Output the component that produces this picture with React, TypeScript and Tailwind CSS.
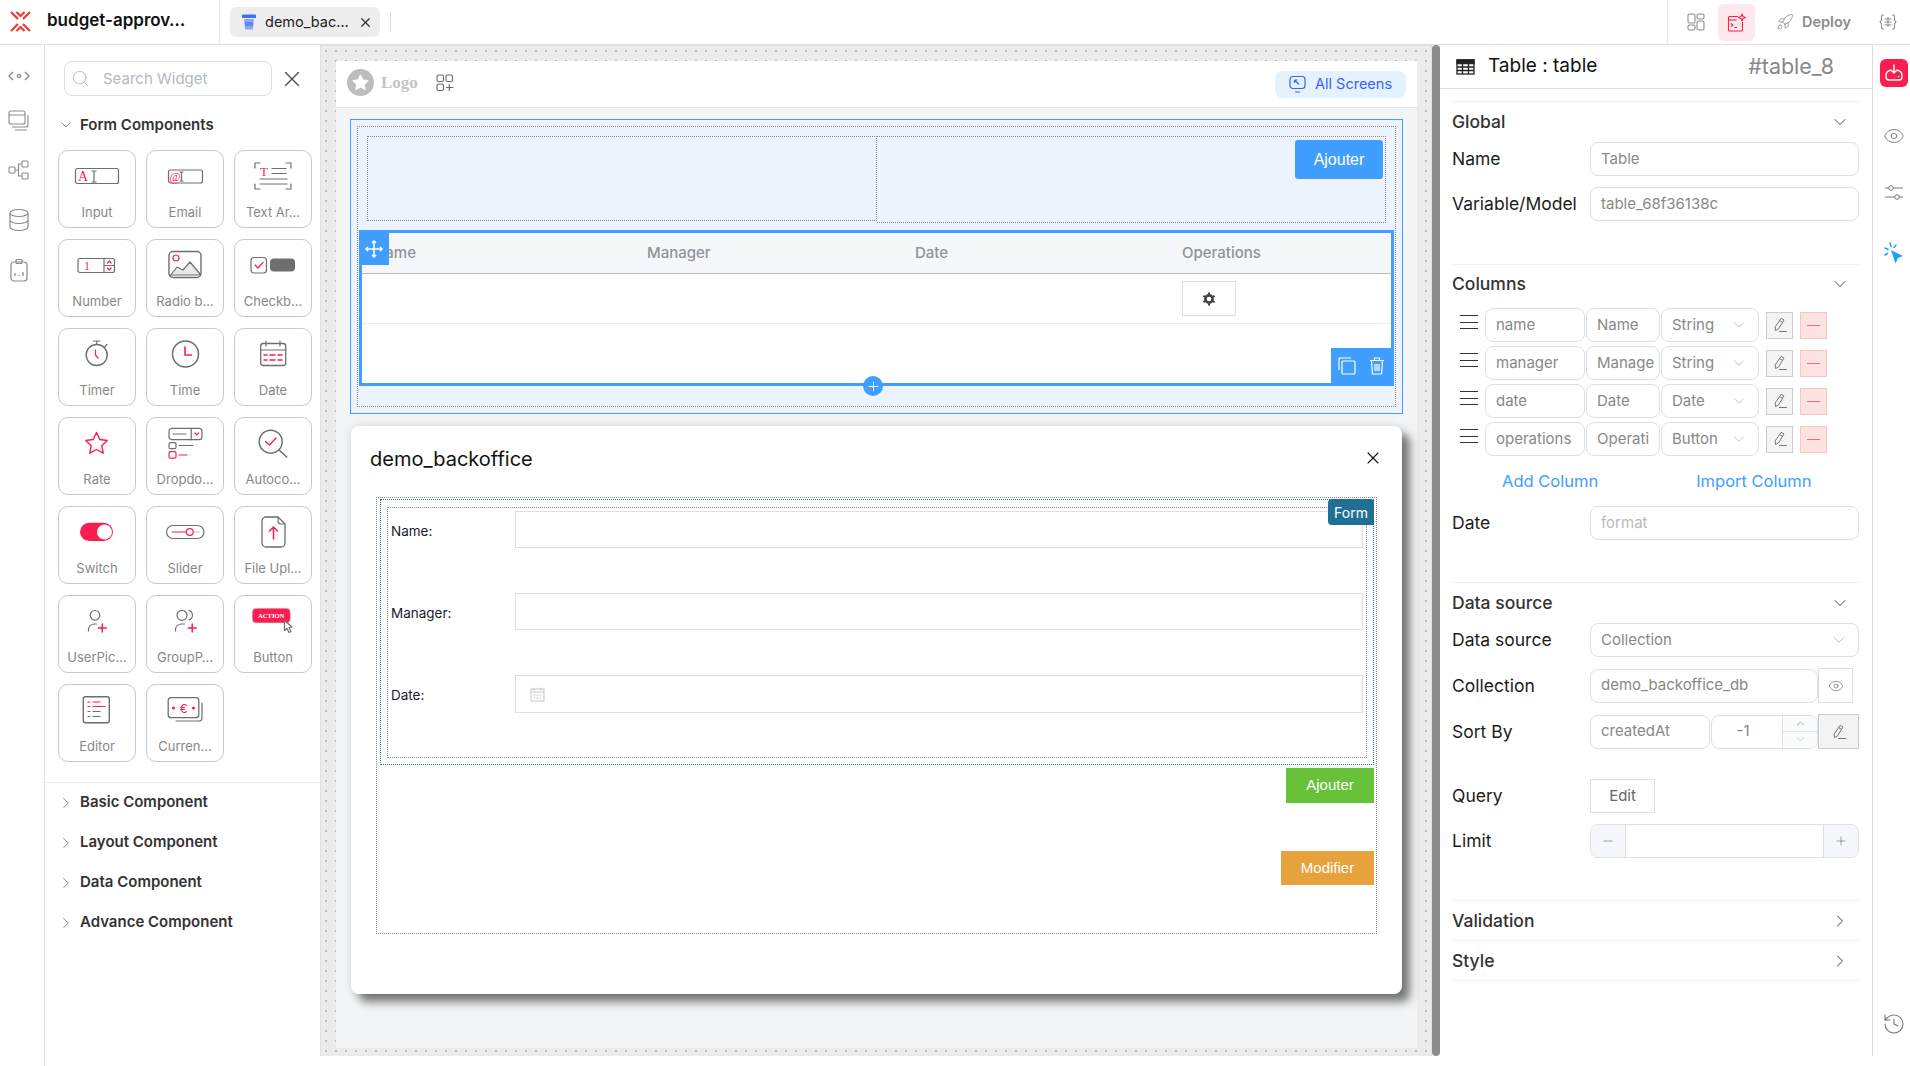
import React from "react";
import { ChevronDown, ChevronRight, ChevronUp, Eye, History, Minus, Plus, Rocket, Search, X } from "lucide-react";

const GR = "#6e6e6e";
const RD = "#fb1d4f";

const Ico: React.FC<{ children: React.ReactNode }> = ({ children }) => (
  <svg width="48" height="40" viewBox="0 0 48 40" fill="none" stroke={GR} strokeWidth="1.2" strokeLinecap="round" strokeLinejoin="round">
    {children}
  </svg>
);

const IText: React.FC<{ x: number; y: number; s: number; children: React.ReactNode; c?: string }> = ({ x, y, s, children, c }) => (
  <text x={x} y={y} fontSize={s} fill={c || RD} stroke="none" fontFamily="'Liberation Serif', serif">
    {children}
  </text>
);

const widgets: { label: string; icon: React.ReactNode }[] = [
  { label: "Input", icon: <Ico><rect x="2.5" y="12.5" width="43" height="15" rx="2" /><IText x={5} y={25} s={14}>A</IText><path d="M19 15h4M21 15v11M19 26h4" /></Ico> },
  { label: "Email", icon: <Ico><rect x="7.5" y="14" width="34" height="13" rx="2" /><IText x={8.5} y={25} s={12}>@</IText><path d="M19 16h3M20.5 16v9M19 25h3" /></Ico> },
  { label: "Text Ar…", icon: <Ico><path d="M11 7H6v5M37 7h5v5M6 28v5h5M42 28v5h-5" /><IText x={11} y={20} s={13}>T</IText><path d="M23 12.5h14M23 17.5h14M11 23h27M11 28h27" /></Ico> },
  { label: "Number", icon: <Ico><rect x="5" y="13.5" width="36.5" height="14" rx="2" /><path d="M31 13.5v14M31 20.5h10.5" /><IText x={11} y={25} s={12}>1</IText><path d="M34.5 18l1.8-2 1.8 2M34.5 23l1.8 2 1.8-2" stroke={RD} /></Ico> },
  { label: "Radio b…", icon: <Ico><rect x="8" y="6.5" width="32" height="26" rx="4" strokeWidth="1.4" /><path d="M9 31l7-9 6 3 7-8 10 12v1H9z" fill="#e9e9e9" /><circle cx="15" cy="13" r="3" stroke={RD} /></Ico> },
  { label: "Checkb…", icon: <Ico><rect x="2" y="12.5" width="15.5" height="15.5" rx="3" /><path d="M6 20l3 3 5-5.5" stroke={RD} /><rect x="21" y="13.5" width="25" height="13" rx="4" fill={GR} stroke="none" /></Ico> },
  { label: "Timer", icon: <Ico><circle cx="23.7" cy="21" r="10.5" strokeWidth="1.4" /><path d="M20.5 7h6.5M23.7 7v3.5M31.5 13l2.5-2.5" /><path d="M22.5 16v5l2.5 3" stroke={RD} /></Ico> },
  { label: "Time", icon: <Ico><circle cx="24.5" cy="20" r="13" strokeWidth="1.5" /><path d="M24 13v8h6.5" stroke={RD} strokeWidth="1.6" /></Ico> },
  { label: "Date", icon: <Ico><rect x="11.7" y="9.5" width="25" height="22" rx="2.5" strokeWidth="1.3" /><path d="M11.7 16h25M17 7v5M31 7v5" /><path d="M15 21h3M21 21h5M29 21h4M15 26h3M21 26h5M29 26h4" stroke={RD} strokeWidth="1.5" /></Ico> },
  { label: "Rate", icon: <Ico><path d="M23.5 9.5l3.3 7 7.5 1-5.5 5.2 1.4 7.5-6.7-3.7-6.7 3.7 1.4-7.5-5.5-5.2 7.5-1z" stroke={RD} strokeWidth="1.4" /></Ico> },
  { label: "Dropdo…", icon: <Ico><rect x="8" y="5.3" width="33" height="11.4" rx="3" /><path d="M30.2 5.3v11.4M12 11h13" /><path d="M34 10l1.8 1.8 1.8-1.8" stroke={RD} /><rect x="8" y="19.7" width="7" height="6" rx="1.5" /><path d="M18 22.5h14" /><rect x="8" y="28.7" width="7" height="6.5" rx="1.5" stroke={RD} /><path d="M18 32h8" stroke={RD} /></Ico> },
  { label: "Autoco…", icon: <Ico><circle cx="21.7" cy="18.7" r="11.5" strokeWidth="1.5" /><path d="M30 27l7.7 7" strokeWidth="1.6" /><path d="M16.5 18.5l4 3.5 6.5-7" stroke={RD} strokeWidth="1.4" /></Ico> },
  { label: "Switch", icon: <Ico><rect x="7" y="10.8" width="33" height="18.2" rx="9.1" fill={RD} stroke="none" /><circle cx="31.5" cy="20" r="7.5" fill="#fff" stroke="none" /></Ico> },
  { label: "Slider", icon: <Ico><rect x="5.5" y="13.5" width="37.5" height="13" rx="6.5" /><path d="M11 20h14" stroke={RD} /><circle cx="28.8" cy="20" r="3.4" stroke={RD} /><path d="M33 20h5" stroke="#bbb" /></Ico> },
  { label: "File Upl…", icon: <Ico><path d="M17 5h12l7 7v19a4 4 0 0 1-4 4H17a4 4 0 0 1-4-4V9a4 4 0 0 1 4-4z" strokeWidth="1.3" /><path d="M29 5v4a3 3 0 0 0 3 3h4" /><path d="M24.5 27V15M20.5 19l4-4 4 4" stroke={RD} strokeWidth="1.5" /></Ico> },
  { label: "UserPic…", icon: <Ico><circle cx="22" cy="14.3" r="4.8" /><path d="M15.5 30v-2a6 6 0 0 1 6-5h2" /><path d="M29.3 23v8M25.3 27h8" stroke={RD} strokeWidth="1.5" /></Ico> },
  { label: "GroupP…", icon: <Ico><circle cx="21" cy="14.3" r="5" /><path d="M28 9.5a5 5 0 0 1 0 9.5" /><path d="M14.5 30v-2a6 6 0 0 1 6-5h3" /><path d="M31.2 23v8M27.2 27h8" stroke={RD} strokeWidth="1.5" /></Ico> },
  { label: "Button", icon: <Ico><rect x="3.3" y="7.3" width="38" height="14.6" rx="4" fill={RD} stroke="#c9c9c9" strokeWidth="0.6" /><text x="22.2" y="17" fontSize="6.6" fontWeight="700" fill="#fff" stroke="none" textAnchor="middle" fontFamily="'Liberation Serif', serif">ACTION</text><path d="M35.5 19.5l0 10 2.5-2 2 4 2-1-2-4 3-.5z" fill="#fff" /></Ico> },
  { label: "Editor", icon: <Ico><rect x="10.3" y="6.7" width="26" height="26" rx="2" strokeWidth="1.4" /><path d="M15 12h2M20 12h7M15 16.5h2M20 16.5h12" stroke={RD} strokeWidth="1.2" /><path d="M15 21.5h2M20 21.5h7M15 26.5h2M20 26.5h7" /></Ico> },
  { label: "Curren…", icon: <Ico><rect x="7.2" y="7.7" width="30.6" height="20" rx="3" strokeWidth="1.3" /><path d="M41 13v15a3 3 0 0 1-3 3H15" /><text x="22.5" y="23" fontSize="13" textAnchor="middle" fill={RD} stroke="none" fontFamily="'Liberation Sans', sans-serif">€</text><circle cx="12.5" cy="18" r="0.9" fill={RD} stroke={RD} /><circle cx="32.5" cy="18" r="0.9" fill={RD} stroke={RD} /></Ico> },
];

const WidgetCard: React.FC<{ label: string; icon: React.ReactNode }> = ({ label, icon }) => (
  <div className="flex h-[78px] w-[78px] flex-col items-center rounded-[10px] border border-[#c9c9c9] bg-white pt-[5px]">
    <div className="h-[40px]">{icon}</div>
    <div className="mt-[7px] whitespace-nowrap text-[13px] leading-[18px] text-[#888]">{label}</div>
  </div>
);

const PencilIco: React.FC = () => (
  <svg width="16" height="16" viewBox="0 0 16 16" fill="none" stroke="#777" strokeWidth="1" strokeLinecap="round" strokeLinejoin="round">
    <path d="M9.5 1.5l2.5 1.5-5.5 9-3 1.5-.3-3.2z" />
    <path d="M8 3.8l2.6 1.6M7.5 14.5h7" />
  </svg>
);

const Field: React.FC<{ className?: string; muted?: boolean; children?: React.ReactNode }> = ({ className, muted, children }) => (
  <div className={`flex h-[34px] items-center whitespace-nowrap rounded-[8px] border border-[#dcdfe6] bg-white px-[10px] text-[15px] ${muted ? "text-[#bbb]" : "text-[#888]"} ${className || ""}`}>
    {children}
  </div>
);

const PropRow: React.FC<{ label: string; children: React.ReactNode; className?: string }> = ({ label, children, className }) => (
  <div className={`flex items-center ${className || ""}`}>
    <div className="-ml-px w-[138px] pt-px text-[17.5px] text-[#1c1c1c]">{label}</div>
    {children}
  </div>
);

const SectionHead: React.FC<{ title: string; open?: boolean; className?: string }> = ({ title, open, className }) => (
  <div className={`flex items-center justify-between border-t border-[#ebeef5] pr-[9px] text-[17.5px] font-medium text-[#333] ${className || ""}`}>
    <span className="-ml-px pt-px">{title}</span>
    {open ? <ChevronDown size={20} strokeWidth={1.1} color="#333" /> : <ChevronRight size={20} strokeWidth={1.1} color="#333" />}
  </div>
);

const columns = [
  { key: "name", label: "Name", type: "String" },
  { key: "manager", label: "Manage", type: "String" },
  { key: "date", label: "Date", type: "Date" },
  { key: "operations", label: "Operati", type: "Button" },
];

const ColumnRow: React.FC<{ k: string; label: string; type: string }> = ({ k, label, type }) => (
  <div className="flex items-center pl-[7px]">
    <div className="mb-[6px] mr-[7px] flex h-[14px] w-[18px] flex-col justify-between">
      <div className="h-px bg-[#333]" />
      <div className="h-px bg-[#333]" />
      <div className="h-px bg-[#333]" />
    </div>
    <Field className="w-[100px]">{k}</Field>
    <Field className="ml-px w-[74px]">{label}</Field>
    <Field className="ml-px w-[98px] justify-between">
      {type}
      <ChevronDown size={18} strokeWidth={1} color="#aaa" />
    </Field>
    <div className="ml-[7px] flex h-[27px] w-[27px] items-center justify-center border border-[#ccc] bg-[#f5f5f5]">
      <PencilIco />
    </div>
    <div className="ml-[7px] flex h-[27px] w-[27px] items-center justify-center border border-[#fbc4c4] bg-[#fde2e2]">
      <div className="h-px w-[13px] bg-[#f56c6c]" />
    </div>
  </div>
);

const Handle: React.FC<{ className: string; children: React.ReactNode }> = ({ className, children }) => (
  <div className={`absolute flex items-center justify-center bg-[#409eff] ${className}`}>{children}</div>
);

const FormField: React.FC<{ label: string; children?: React.ReactNode; h?: string }> = ({ label, children, h }) => (
  <div className="flex items-center">
    <div className="mt-[3px] w-[127px] pl-[3px] text-[13.5px] text-[#1a1a2e]">{label}</div>
    <div className={`flex flex-1 items-center border border-[#dcdfe6] bg-white pl-[14px] ${h || "h-[37px]"}`}>{children}</div>
  </div>
);

export default function App() {
  return (
    <div className="flex h-[1066px] w-[1910px] flex-col overflow-hidden bg-white font-[Inter,sans-serif]">
      {/* top bar */}
      <div className="flex h-[45px] shrink-0 items-center border-b border-[#dedede]">
        <div className="flex h-full w-[220px] items-center border-r border-[#e6e6e6] pb-[2px] pl-[10px]">
          <svg width="21" height="21" viewBox="0 0 21 21" fill="none" stroke="#ef3a32" strokeWidth="2.2">
            <path d="M1 1l7 7M20 1l-7 7M1 20l7-7M20 20l-7-7M6.5 1l4 4 4-4M6.5 20l4-4 4 4" />
          </svg>
          <span className="ml-[16px] whitespace-nowrap text-[17px] font-semibold text-[#111]">budget-approv…</span>
        </div>
        <div className="ml-[10px] flex h-[30px] w-[150px] items-center rounded-[6px] bg-[#ededed] pl-[11px]">
          <svg width="16" height="16" viewBox="0 0 16 16">
            <path d="M1 1.5a1 1 0 0 1 1-1h12a1 1 0 0 1 1 1V4H1z" fill="#3f6ff5" />
            <path d="M3 5h10l-1 9.5a1 1 0 0 1-1 1H5a1 1 0 0 1-1-1z" fill="#8ba6f7" />
            <path d="M4 8h8v4H4z" fill="#3f6ff5" opacity="0.6" />
          </svg>
          <span className="ml-[8px] whitespace-nowrap text-[14.5px] text-[#222]">demo_bac…</span>
          <X size={15} strokeWidth={2} color="#333" className="ml-[9px]" />
        </div>
        <div className="ml-[10px] h-[20px] w-px bg-[#ddd]" />
        <div className="ml-auto flex h-full items-center border-l border-[#e6e6e6] pl-[19px]">
          <svg width="18" height="18" viewBox="0 0 18 18" fill="none" stroke="#8c8c8c" strokeWidth="1.1">
            <rect x="1" y="1" width="7" height="9" rx="1.5" /><rect x="10" y="1" width="7" height="5" rx="1.5" />
            <rect x="1" y="12" width="7" height="5" rx="1.5" /><rect x="10" y="8" width="7" height="9" rx="1.5" />
          </svg>
          <div className="ml-[13px] flex h-[37px] w-[37px] items-center justify-center rounded-[6px] bg-[#ffe8ec]">
            <svg width="19" height="19" viewBox="0 0 19 19" fill="none" stroke={RD} strokeWidth="1.1" strokeLinejoin="round">
              <path d="M11 3.5H2.5a1 1 0 0 0-1 1V17a1 1 0 0 0 1 1h12a1 1 0 0 0 1-1V9" /><path d="M1.5 7h8" /><path d="M4 10.5l2 1.5-2 1.5M7.5 14.5H10" />
              <path d="M15 1l1 2.5 2.5 1-2.5 1-1 2.5-1-2.5-2.5-1 2.5-1z" />
            </svg>
          </div>
          <Rocket size={18} strokeWidth={1.1} color="#8c8c8c" className="ml-[21px]" />
          <span className="ml-[8px] text-[14.5px] font-semibold text-[#8c8c8c]">Deploy</span>
          <svg width="18" height="18" viewBox="0 0 18 18" fill="none" stroke="#8c8c8c" strokeWidth="1.1" className="ml-[28px] mr-[13px]">
            <path d="M5 2H4a1.5 1.5 0 0 0-1.5 1.5V7L1 9l1.5 2v3.5A1.5 1.5 0 0 0 4 16h1M13 2h1a1.5 1.5 0 0 1 1.5 1.5V7L17 9l-1.5 2v3.5A1.5 1.5 0 0 1 14 16h-1" />
            <path d="M5.5 6h7M5.5 9h7M5.5 12h7M9 4v10" />
          </svg>
        </div>
      </div>

      <div className="flex min-h-0 flex-1">
        {/* icon rail */}
        <div className="flex w-[45px] shrink-0 flex-col items-center border-r border-[#dedede] pr-[7px] pt-[19px]">
          <svg width="22" height="24" viewBox="0 0 22 24" fill="none" stroke="#8a8a8a" strokeWidth="1.4">
            <path d="M5 8l-4 4 4 4M17 8l4 4-4 4" /><circle cx="11" cy="12" r="1.6" />
          </svg>
          <svg width="22" height="24" viewBox="0 0 22 24" fill="none" stroke="#8a8a8a" strokeWidth="1.1" className="mt-[20px]">
            <rect x="1" y="3" width="16" height="13" rx="2" /><path d="M1 7h16M4 19h14a2 2 0 0 0 2-2V7M7 22h12" />
          </svg>
          <svg width="22" height="24" viewBox="0 0 22 24" fill="none" stroke="#8a8a8a" strokeWidth="1.1" className="mt-[26px]">
            <rect x="1" y="9" width="6" height="6" rx="1" /><rect x="14" y="3" width="6" height="6" rx="1" /><rect x="14" y="15" width="6" height="6" rx="1" /><path d="M7 12h3.5V6H14M10.5 12v6H14" />
          </svg>
          <svg width="22" height="24" viewBox="0 0 22 24" fill="none" stroke="#8a8a8a" strokeWidth="1.2" className="mt-[26px]">
            <ellipse cx="11" cy="5" rx="9" ry="3.5" /><path d="M2 5v14c0 2 4 3.5 9 3.5s9-1.5 9-3.5V5M2 12c0 2 4 3.5 9 3.5s9-1.5 9-3.5" />
          </svg>
          <svg width="22" height="24" viewBox="0 0 22 24" fill="none" stroke="#8a8a8a" strokeWidth="1.2" className="mt-[26px]">
            <rect x="3" y="4" width="16" height="19" rx="3" /><rect x="8" y="1.5" width="6" height="4" rx="1" /><path d="M7 18v-3M11 18v-1M15 18v-4" />
          </svg>
        </div>

        {/* widget panel */}
        <div className="w-[275px] shrink-0">
          <div className="flex items-center pl-[19px] pt-[16px]">
            <div className="flex h-[35px] w-[208px] items-center rounded-[8px] border border-[#dcdfe6] pl-[6px]">
              <Search size={19} strokeWidth={1} color="#aaa" />
              <span className="ml-[13px] mt-[1px] text-[15px] text-[#b5b9c2]">Search Widget</span>
            </div>
            <X size={26} strokeWidth={1.3} color="#555" className="ml-[7px]" />
          </div>
          <div className="mt-[18px] flex items-center pl-[13px] text-[15px] font-semibold text-[#333]">
            <span className="w-[22px]"><ChevronDown size={16} strokeWidth={1} color="#555" /></span>
            Form Components
          </div>
          <div className="mt-[13px] grid grid-cols-[78px_78px_78px] gap-x-[10px] gap-y-[11px] pl-[13px]">
            {widgets.map((w) => (
              <WidgetCard key={w.label} label={w.label} icon={w.icon} />
            ))}
          </div>
          <div className="mt-[20px] border-t border-[#eeeeee] pl-[13px] text-[15px] font-semibold text-[#333]">
            {["Basic Component", "Layout Component", "Data Component", "Advance Component"].map((t) => (
              <div key={t} className="flex h-[40px] items-center">
                <span className="-ml-[1px] mr-[5px]"><ChevronRight size={18} strokeWidth={1} color="#555" /></span>
                {t}
              </div>
            ))}
          </div>
        </div>

        {/* canvas */}
        <div className="flex h-[1011px] w-[1112px] shrink-0 border border-b-0 border-[#dedede] bg-[#ececec] bg-[radial-gradient(circle,#bcbcbc_1px,transparent_1.2px)] bg-[size:10px_10px] pb-[8px] pl-[15px] pr-[14px] pt-[15px]">
          <div className="flex-1 bg-[#f3f4f6]">
            <div className="flex h-[47px] items-center border-b border-[#e2e2e2] bg-white pl-[11px] pr-[11px]">
              <div className="-mt-[3px] flex h-[27px] w-[27px] items-center justify-center rounded-full bg-[#bdbdbd]">
                <svg width="17" height="17" viewBox="0 0 24 24" fill="#fff"><path d="M12 1.5l3.3 6.8 7.4 1-5.4 5.2 1.3 7.4-6.6-3.5-6.6 3.5 1.3-7.4L1.3 9.3l7.4-1z" stroke="#fff" strokeWidth="1.5" strokeLinejoin="round" /></svg>
              </div>
              <span className="-mt-[3px] ml-[7px] font-['Liberation_Serif',serif] text-[17px] font-bold text-[#c4c4c4]">Logo</span>
              <svg width="18" height="18" viewBox="0 0 18 18" fill="none" stroke="#666" strokeWidth="1.1" className="-mt-[3px] ml-[18px]">
                <rect x="1" y="1" width="6.5" height="6.5" rx="1.5" /><rect x="10" y="1" width="6.5" height="6.5" rx="1.5" /><rect x="1" y="10" width="6.5" height="6.5" rx="1.5" /><path d="M13.3 10v7M10 13.5h7.5" />
              </svg>
              <div className="ml-auto flex h-[27px] w-[131px] items-center rounded-[8px] bg-[#e3f2fd] pl-[14px] text-[14.5px] text-[#3f5efb]">
                <svg width="17" height="18" viewBox="0 0 17 18" fill="none" stroke="#3f5efb" strokeWidth="1.2" className="mr-[9px]">
                  <rect x="1" y="1.5" width="15" height="12" rx="3" /><path d="M6 17h5M5.5 5l4.5 4.5M5.5 5h3M5.5 5v3" />
                </svg>
                All Screens
              </div>
            </div>

            <div className="ml-[14px] mr-[14px] mt-[11px] h-[295px] border border-[#409eff] bg-[#ecf3fd] p-[6px]">
              <div className="h-full border border-dotted border-[#8a8a8a] px-[9px] pt-[9px]">
                <div className="flex items-start">
                  <div className="h-[85px] w-1/2 border border-dotted border-[#8a8a8a]" />
                  <div className="flex h-[87px] w-1/2 justify-end border border-l-0 border-dotted border-[#8a8a8a] pr-[2px] pt-[3px]">
                    <div className="flex h-[39px] w-[88px] items-center justify-center rounded-[3px] bg-[#409eff] font-['Liberation_Sans',sans-serif] text-[16px] text-white">Ajouter</div>
                  </div>
                </div>
                <div className="relative -mx-[8px] mt-[7px] flex h-[156px] flex-col border-[3px] border-[#409eff] bg-white">
                  <div className="grid h-[41px] shrink-0 grid-cols-[285px_268px_267px_1fr] items-center border-b border-[#bcbcbc] bg-[#f5f7fb] text-[15px] font-medium text-[#909399]">
                    <span className="pl-[12px]">Name</span>
                    <span>Manager</span>
                    <span>Date</span>
                    <span>Operations</span>
                  </div>
                  <div className="grid h-[50px] shrink-0 grid-cols-[820px_1fr] items-center border-b border-[#ececec]">
                    <span />
                    <div className="flex h-[35px] w-[54px] items-center justify-center border border-[#dcdfe6]">
                      <svg width="14" height="14" viewBox="0 0 14 14" fill="none" stroke="#444" strokeWidth="2.6">
                        <circle cx="7" cy="7" r="3.6" /><path d="M7 0.5v2M7 11.5v2M1.4 3.8l1.7 1M10.9 9.2l1.7 1M1.4 10.2l1.7-1M10.9 4.8l1.7-1" strokeWidth="2" />
                      </svg>
                    </div>
                  </div>
                  <Handle className="-left-[3px] top-0 h-[32px] w-[30px]">
                    <svg width="18" height="18" viewBox="0 0 18 18" fill="none" stroke="#fff" strokeWidth="1.5">
                      <path d="M9 1v16M1 9h16M7 3l2-2 2 2M7 15l2 2 2-2M3 7L1 9l2 2M15 7l2 2-2 2" />
                    </svg>
                  </Handle>
                  <Handle className="-bottom-[3px] -right-[3px] h-[38px] w-[63px] gap-[13px] pb-[2px] pr-[2px]">
                    <svg width="18" height="18" viewBox="0 0 18 18" fill="none" stroke="#fff" strokeWidth="1.2">
                      <path d="M13 1H2a1 1 0 0 0-1 1v11" /><rect x="4" y="4" width="13" height="13" rx="1" />
                    </svg>
                    <svg width="16" height="18" viewBox="0 0 16 18" fill="none" stroke="#fff" strokeWidth="1.2">
                      <path d="M1 3.5h14M5.5 3.5V1h5v2.5M2.5 3.5l1 13.5h9l1-13.5M6 7v7M8 7v7M10 7v7" />
                    </svg>
                  </Handle>
                  <div className="absolute -bottom-[13px] left-[501px] flex h-[20px] w-[20px] items-center justify-center rounded-full bg-[#409eff]">
                    <Plus size={15} strokeWidth={1.5} color="#fff" />
                  </div>
                </div>
              </div>
            </div>

            {/* modal */}
            <div className="ml-[15px] mr-[15px] mt-[12px] h-[568px] rounded-[8px] bg-white px-[25px] shadow-[0_0_10px_rgba(0,0,0,0.12),8px_8px_10px_rgba(0,0,0,0.5)]">
              <div className="flex h-[71px] items-center justify-between pb-[6px]">
                <span className="-ml-[6px] text-[20px] text-[#111]">demo_backoffice</span>
                <X size={20} strokeWidth={1.3} color="#111" className="-mr-[6px] -mt-[2px]" />
              </div>
              <div className="h-[437px] border border-dotted border-[#8a8a8a] pl-[3px] pr-[2px] pt-[1px]">
                <div className="relative h-[266px] border border-dotted border-[#206f94] px-[6px] pt-[7px]">
                  <div className="h-[251px] border border-dotted border-[#8a8a8a] pr-[3px] pt-[3px]">
                    <div className="flex flex-col gap-[45px]">
                      <FormField label="Name:" />
                      <FormField label="Manager:" />
                      <FormField label="Date:" h="h-[38px]">
                        <svg width="15" height="15" viewBox="0 0 15 15" fill="none" stroke="#c4c8d0" strokeWidth="1">
                          <rect x="1" y="2" width="13" height="12" /><path d="M1 5h13M4 0.5v3M11 0.5v3" /><path d="M3.5 8h8M3.5 11h8" strokeDasharray="2 1" />
                        </svg>
                      </FormField>
                    </div>
                  </div>
                  <div className="absolute -right-px -top-px flex h-[26px] w-[46px] items-center justify-center rounded-bl-[4px] rounded-tl-[4px] rounded-tr-[4px] bg-[#206f94] text-[14px] text-white">Form</div>
                </div>
                <div className="flex flex-col items-end">
                  <div className="mt-[3px] flex h-[35px] w-[88px] items-center justify-center bg-[#67c23a] font-['Liberation_Sans',sans-serif] text-[15px] text-white">Ajouter</div>
                  <div className="mt-[48px] flex h-[34px] w-[93px] items-center justify-center bg-[#e6a23c] font-['Liberation_Sans',sans-serif] text-[15px] text-white">Modifier</div>
                </div>
              </div>
            </div>
          </div>
        </div>

        {/* scrollbar */}
        <div className="h-[1011px] w-[8px] shrink-0 rounded-b-[4px] rounded-t-[4px] bg-[#8c8c8c]" />

        {/* properties */}
        <div className="h-[1011px] w-[433px] shrink-0 border-r border-[#dedede]">
          <div className="flex h-[44px] items-center border-b border-[#dedede] pl-[16px] pr-[38px]">
            <svg width="19" height="16" viewBox="0 0 19 16" fill="none" stroke="#222" strokeWidth="1.3">
              <rect x="1" y="1" width="17" height="14" /><path d="M1 1h17v3.5H1z" fill="#222" /><path d="M1 8h17M1 11.5h17M6.5 1v14M12.5 1v14" />
            </svg>
            <span className="ml-[13px] text-[19px] text-[#111]">Table : table</span>
            <span className="ml-auto text-[21.5px] text-[#888]">#table_8</span>
          </div>
          <div className="mt-[12px] px-[13px]">
            <SectionHead title="Global" open className="h-[41px]" />
            <PropRow label="Name"><Field className="w-[269px]">Table</Field></PropRow>
            <PropRow label="Variable/Model" className="mt-[11px]"><Field className="w-[269px]">table_68f36138c</Field></PropRow>
            <SectionHead title="Columns" open className="mt-[43px] h-[39px]" />
            <div className="mt-[5px] flex flex-col gap-[4px]">
              {columns.map((c) => (
                <ColumnRow key={c.key} k={c.key} label={c.label} type={c.type} />
              ))}
            </div>
            <div className="mt-[11px] flex h-[28px] items-center pl-[49px] text-[16.5px] text-[#409eff]">
              <span>Add Column</span>
              <span className="ml-[98px]">Import Column</span>
            </div>
            <PropRow label="Date" className="mt-[11px]"><Field muted className="w-[269px]">format</Field></PropRow>
            <SectionHead title="Data source" open className="mt-[42px] h-[41px]" />
            <PropRow label="Data source"><Field className="w-[269px] justify-between">Collection<ChevronDown size={18} strokeWidth={1} color="#aaa" /></Field></PropRow>
            <PropRow label="Collection" className="mt-[11px]">
              <Field className="w-[228px]">demo_backoffice_db</Field>
              <div className="flex h-[35px] w-[35px] items-center justify-center border border-[#dcdfe6]"><Eye size={16} strokeWidth={1} color="#666" /></div>
            </PropRow>
            <PropRow label="Sort By" className="mt-[11px]">
              <Field className="w-[120px]">createdAt</Field>
              <div className="ml-px flex h-[34px] w-[107px] items-center overflow-hidden rounded-[8px] border border-[#dcdfe6] text-[15px] text-[#888]">
                <span className="flex-1 pr-[8px] text-center">-1</span>
                <div className="flex h-full w-[35px] flex-col border-l border-[#dcdfe6] bg-[#fafbfc]">
                  <div className="flex flex-1 items-center justify-center border-b border-[#dcdfe6]"><ChevronUp size={13} strokeWidth={1} color="#666" /></div>
                  <div className="flex flex-1 items-center justify-center"><ChevronDown size={13} strokeWidth={1} color="#aaa" /></div>
                </div>
              </div>
              <div className="flex h-[35px] w-[41px] items-center justify-center border border-[#ccc] bg-[#f3f3f3]"><PencilIco /></div>
            </PropRow>
            <PropRow label="Query" className="mt-[30px]">
              <div className="flex h-[34px] w-[65px] items-center justify-center border border-[#dcdfe6] text-[15px] text-[#666]">Edit</div>
            </PropRow>
            <PropRow label="Limit" className="mt-[11px]">
              <div className="flex h-[34px] w-[269px] overflow-hidden rounded-[8px] border border-[#dcdfe6]">
                <div className="flex w-[35px] items-center justify-center border-r border-[#dcdfe6] bg-[#f5f7fa]"><Minus size={14} strokeWidth={1} color="#666" /></div>
                <div className="flex-1" />
                <div className="flex w-[35px] items-center justify-center border-l border-[#dcdfe6] bg-[#f5f7fa]"><Plus size={14} strokeWidth={1} color="#666" /></div>
              </div>
            </PropRow>
            <SectionHead title="Validation" className="mt-[42px] h-[40px]" />
            <SectionHead title="Style" className="h-[40px]" />
            <div className="border-t border-[#ebeef5]" />
          </div>
        </div>

        {/* right rail */}
        <div className="flex h-[1011px] flex-1 flex-col items-center pl-[5px] pt-[14px]">
          <div className="flex h-[28px] w-[28px] items-center justify-center rounded-[6px] bg-[#fb1d4f]">
            <svg width="20" height="20" viewBox="0 0 20 20" fill="none" stroke="#fff" strokeWidth="1.4" strokeLinecap="round">
              <path d="M10 2v8M7 7l3 3 3-3M6 7.5C3.5 8 2 10 2 12.5V14a3 3 0 0 0 3 3h10a3 3 0 0 0 3-3v-1.5C18 10 16.5 8 14 7.5M14.5 13.5h.1" />
            </svg>
          </div>
          <Eye size={22} strokeWidth={1} color="#777" className="mt-[38px]" />
          <svg width="20" height="20" viewBox="0 0 20 20" fill="none" stroke="#777" strokeWidth="1" className="mt-[36px]">
            <circle cx="7" cy="5" r="2.3" /><circle cx="13" cy="14" r="2.3" /><path d="M1 5h3.7M9.3 5H19M1 14h9.7M15.3 14H19" />
          </svg>
          <svg width="20" height="22" viewBox="0 0 20 22" fill="#1ea0f5" className="mt-[39px]">
            <path d="M7 8l12 6-5 2-2.5 5.500z" />
            <path d="M6 1l1.200 3.500M1 6l3 1.500M12 3l-2 2.500M1 13l2.500-1.500" stroke="#1ea0f5" strokeWidth="1.5" strokeLinecap="round" />
          </svg>
          <History size={24} strokeWidth={1.1} color="#777" className="mb-[20px] mt-auto" />
        </div>
      </div>
    </div>
  );
}
